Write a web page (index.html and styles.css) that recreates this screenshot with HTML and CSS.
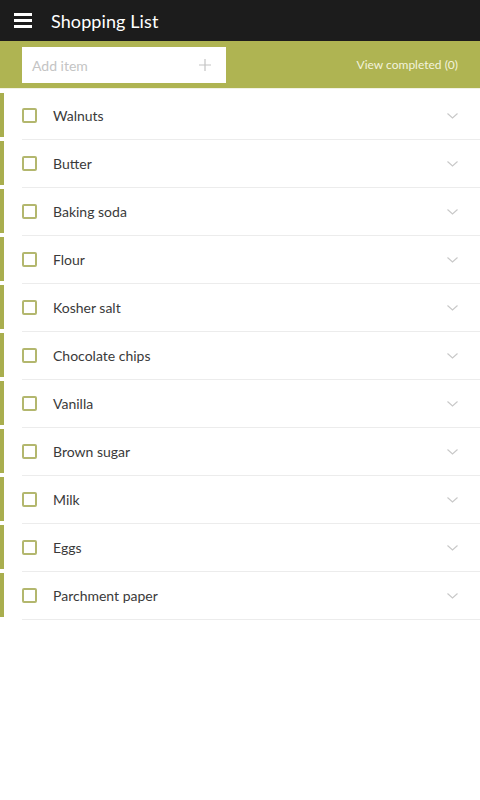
FILE: index.html
```html
<!DOCTYPE html>
<html>
<head>
<meta charset="utf-8">
<link rel="stylesheet" href="styles.css">
</head>
<body>
<header class="topbar">
  <span class="menu"><i></i><i></i><i></i></span>
  <h1 class="title">Shopping List</h1>
</header>
<div class="addbar">
  <div class="addbox">
    <span class="placeholder">Add item</span>
    <svg class="plus" width="12" height="12" viewBox="0 0 12 12"><path d="M6 0V12M0 6H12" stroke="#c4c4c4" stroke-width="1.2" fill="none"/></svg>
  </div>
  <span class="viewdone">View completed (0)</span>
</div>
<ul class="list">
  <li class="item"><span class="check"></span><span class="name">Walnuts</span><svg class="chev" width="11" height="6" viewBox="0 0 11 6"><path d="M0.5 0.5L5.5 5L10.5 0.5" stroke="#c8c8c8" stroke-width="1.1" fill="none"/></svg></li>
  <li class="item"><span class="check"></span><span class="name">Butter</span><svg class="chev" width="11" height="6" viewBox="0 0 11 6"><path d="M0.5 0.5L5.5 5L10.5 0.5" stroke="#c8c8c8" stroke-width="1.1" fill="none"/></svg></li>
  <li class="item"><span class="check"></span><span class="name">Baking soda</span><svg class="chev" width="11" height="6" viewBox="0 0 11 6"><path d="M0.5 0.5L5.5 5L10.5 0.5" stroke="#c8c8c8" stroke-width="1.1" fill="none"/></svg></li>
  <li class="item"><span class="check"></span><span class="name">Flour</span><svg class="chev" width="11" height="6" viewBox="0 0 11 6"><path d="M0.5 0.5L5.5 5L10.5 0.5" stroke="#c8c8c8" stroke-width="1.1" fill="none"/></svg></li>
  <li class="item"><span class="check"></span><span class="name">Kosher salt</span><svg class="chev" width="11" height="6" viewBox="0 0 11 6"><path d="M0.5 0.5L5.5 5L10.5 0.5" stroke="#c8c8c8" stroke-width="1.1" fill="none"/></svg></li>
  <li class="item"><span class="check"></span><span class="name">Chocolate chips</span><svg class="chev" width="11" height="6" viewBox="0 0 11 6"><path d="M0.5 0.5L5.5 5L10.5 0.5" stroke="#c8c8c8" stroke-width="1.1" fill="none"/></svg></li>
  <li class="item"><span class="check"></span><span class="name">Vanilla</span><svg class="chev" width="11" height="6" viewBox="0 0 11 6"><path d="M0.5 0.5L5.5 5L10.5 0.5" stroke="#c8c8c8" stroke-width="1.1" fill="none"/></svg></li>
  <li class="item"><span class="check"></span><span class="name">Brown sugar</span><svg class="chev" width="11" height="6" viewBox="0 0 11 6"><path d="M0.5 0.5L5.5 5L10.5 0.5" stroke="#c8c8c8" stroke-width="1.1" fill="none"/></svg></li>
  <li class="item"><span class="check"></span><span class="name">Milk</span><svg class="chev" width="11" height="6" viewBox="0 0 11 6"><path d="M0.5 0.5L5.5 5L10.5 0.5" stroke="#c8c8c8" stroke-width="1.1" fill="none"/></svg></li>
  <li class="item"><span class="check"></span><span class="name">Eggs</span><svg class="chev" width="11" height="6" viewBox="0 0 11 6"><path d="M0.5 0.5L5.5 5L10.5 0.5" stroke="#c8c8c8" stroke-width="1.1" fill="none"/></svg></li>
  <li class="item"><span class="check"></span><span class="name">Parchment paper</span><svg class="chev" width="11" height="6" viewBox="0 0 11 6"><path d="M0.5 0.5L5.5 5L10.5 0.5" stroke="#c8c8c8" stroke-width="1.1" fill="none"/></svg></li>
</ul>
</body>
</html>
```
FILE: styles.css
```css
* { box-sizing: border-box; }
html, body { margin: 0; padding: 0; background: #fff; }
body { font-family: Lato, "Open Sans", sans-serif; width: 480px; }

.topbar {
  height: 41px;
  background: #1c1c1c;
  display: flex;
  align-items: center;
  padding-left: 14px;
}
.menu { display: flex; flex-direction: column; gap: 3px; width: 18px; }
.menu i { display: block; height: 3px; background: #fff; }
.title {
  margin: 0 0 0 19px;
  color: #fff;
  font-size: 18px;
  font-weight: 400;
  letter-spacing: 0.1px;
}

.addbar {
  height: 48px;
  background: #afb452;
  display: flex;
  align-items: flex-start;
  padding: 6px 22px 0 22px;
  border-bottom: 1px solid #f2f2e4;
}
.addbox {
  width: 204px;
  height: 36px;
  background: #fff;
  display: flex;
  align-items: center;
  justify-content: space-between;
  padding: 0 15px 0 10px;
}
.placeholder { color: #c4c4c4; font-size: 14px; }
.viewdone {
  margin-left: auto;
  color: #f3f3dc;
  font-size: 12px;
  line-height: 36px;
}

.list { list-style: none; margin: 0; padding: 3px 0 0 0; }
.item {
  height: 48px;
  display: flex;
  align-items: center;
  padding-left: 22px;
  padding-right: 22px;
  padding-bottom: 1px;
  position: relative;
}
.item::before {
  content: "";
  position: absolute;
  left: 0;
  top: 1px;
  width: 4px;
  height: 44px;
  background: #a9ae4e;
}
.item::after {
  content: "";
  position: absolute;
  left: 22px;
  right: 0;
  bottom: 0;
  height: 1px;
  background: #ececec;
}
.check {
  width: 15px;
  height: 15px;
  border: 2px solid #b3b76e;
  border-radius: 2px;
  flex: none;
}
.name {
  margin-left: 16px;
  color: #3a3a3a;
  font-size: 14px;
}
.chev { margin-left: auto; }
```
